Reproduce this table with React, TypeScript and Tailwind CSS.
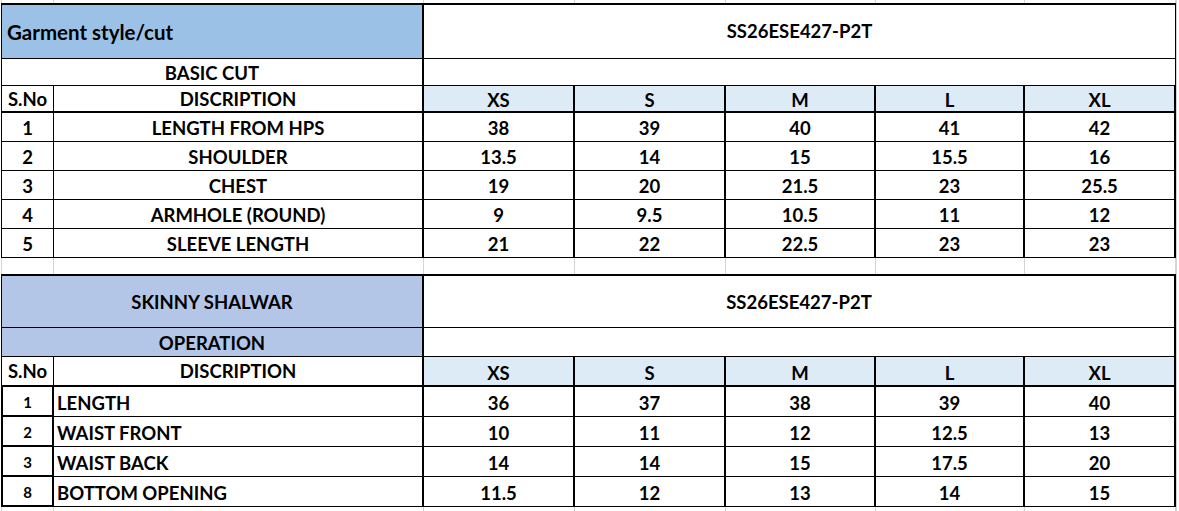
import React from "react";

const COLS = "grid grid-cols-[53px_370px_151px_151px_150px_149px_151px]";
const sizes = ["XS", "S", "M", "L", "XL"];

const block1 = [
  ["1", "LENGTH FROM HPS", ["38", "39", "40", "41", "42"]],
  ["2", "SHOULDER", ["13.5", "14", "15", "15.5", "16"]],
  ["3", "CHEST", ["19", "20", "21.5", "23", "25.5"]],
  ["4", "ARMHOLE (ROUND)", ["9", "9.5", "10.5", "11", "12"]],
  ["5", "SLEEVE LENGTH", ["21", "22", "22.5", "23", "23"]],
] as const;

const block2 = [
  ["1", "LENGTH", ["36", "37", "38", "39", "40"]],
  ["2", "WAIST FRONT", ["10", "11", "12", "12.5", "13"]],
  ["3", "WAIST BACK", ["14", "14", "15", "17.5", "20"]],
  ["8", "BOTTOM OPENING", ["11.5", "12", "13", "14", "15"]],
] as const;

function GridStrip({ h }: { h: string }) {
  return (
    <div className={`${COLS} ${h}`}>
      <div className="border-l border-r border-[#d4d4d4]" />
      <div className="border-r border-[#d4d4d4]" />
      <div className="border-r border-[#d4d4d4]" />
      <div className="border-r border-[#d4d4d4]" />
      <div className="border-r border-[#d4d4d4]" />
      <div className="border-r border-[#d4d4d4]" />
      <div className="border-r border-[#d4d4d4]" />
    </div>
  );
}

export default function App() {
  return (
    <div
      className="w-[1179px] h-[511px] bg-white text-black font-bold overflow-hidden text-[18.5px] leading-none"
      style={{ fontFamily: "Lato, 'Open Sans', sans-serif" }}
    >
      <div className="w-[1177px] h-[511px] pl-[1px] border-r border-[#d4d4d4]">
        <GridStrip h="h-[3px]" />

        {/* Block 1 */}
        <div className={`${COLS} h-[56px]`}>
          <div className="col-span-2 bg-[#9bc2e6] border-t-2 border-l border-b border-r-2 border-black flex items-center pl-[5px] pt-[1px] text-[20.5px]">
            Garment style/cut
          </div>
          <div className="col-span-5 border-t-2 border-b border-r border-black flex items-center justify-center">
            SS26ESE427-P2T
          </div>
        </div>
        <div className={`${COLS} h-[27px]`}>
          <div className="col-span-2 border-l border-b border-r-2 border-black flex items-center justify-center pt-[2px]">
            BASIC CUT
          </div>
          <div className="col-span-5 border-b border-r border-black" />
        </div>
        <div className={`${COLS} h-[27px]`}>
          <div className="border-l border-b-2 border-r border-black flex items-center justify-center pt-[2px]">S.No</div>
          <div className="border-b-2 border-r-2 border-black flex items-center justify-center pt-[2px]">DISCRIPTION</div>
          {sizes.map((s) => (
            <div key={s} className="bg-[#ddebf7] border-b-2 border-r-2 border-black flex items-center justify-center pt-[4px]">
              {s}
            </div>
          ))}
        </div>
        {block1.map(([n, d, v]) => (
          <div key={n} className={`${COLS} h-[29px]`}>
            <div className="border-l border-b border-r border-black flex items-center justify-center pt-[3px]">{n}</div>
            <div className="border-b border-r-2 border-black flex items-center justify-center pt-[3px]">{d}</div>
            {v.map((x, i) => (
              <div key={i} className="border-b border-r-2 border-black flex items-center justify-center pt-[3px]">
                {x}
              </div>
            ))}
          </div>
        ))}

        <GridStrip h="h-[16px]" />

        {/* Block 2 */}
        <div className={`${COLS} h-[54px]`}>
          <div className="col-span-2 bg-[#b4c6e7] border-t-2 border-l border-b border-r-2 border-black flex items-center justify-center pt-[1px]">
            SKINNY SHALWAR
          </div>
          <div className="col-span-5 border-t-2 border-b border-r-2 border-black flex items-center justify-center pt-[1px]">
            SS26ESE427-P2T
          </div>
        </div>
        <div className={`${COLS} h-[29px]`}>
          <div className="col-span-2 bg-[#b4c6e7] border-l border-b border-r-2 border-black flex items-center justify-center pt-[2px]">
            OPERATION
          </div>
          <div className="col-span-5 border-b border-r-2 border-black" />
        </div>
        <div className={`${COLS} h-[30px]`}>
          <div className="border-l border-b-2 border-r border-black flex items-center justify-center pt-[1px]">S.No</div>
          <div className="border-b-2 border-r-2 border-black flex items-center justify-center pt-[1px]">DISCRIPTION</div>
          {sizes.map((s) => (
            <div key={s} className="bg-[#ddebf7] border-b-2 border-r-2 border-black flex items-center justify-center pt-[4px]">
              {s}
            </div>
          ))}
        </div>
        {block2.map(([n, d, v]) => (
          <div key={n} className={`${COLS} h-[30px]`}>
            <div className="border-l-2 border-b-2 border-r-2 border-black flex items-center justify-center text-[15px] pt-[2px]">
              {n}
            </div>
            <div className="border-b border-r-2 border-black flex items-center pl-[3px] pt-[3px]">{d}</div>
            {v.map((x, i) => (
              <div key={i} className="border-b border-r-2 border-black flex items-center justify-center pt-[3px]">
                {x}
              </div>
            ))}
          </div>
        ))}
        <GridStrip h="h-[4px]" />
      </div>
    </div>
  );
}
